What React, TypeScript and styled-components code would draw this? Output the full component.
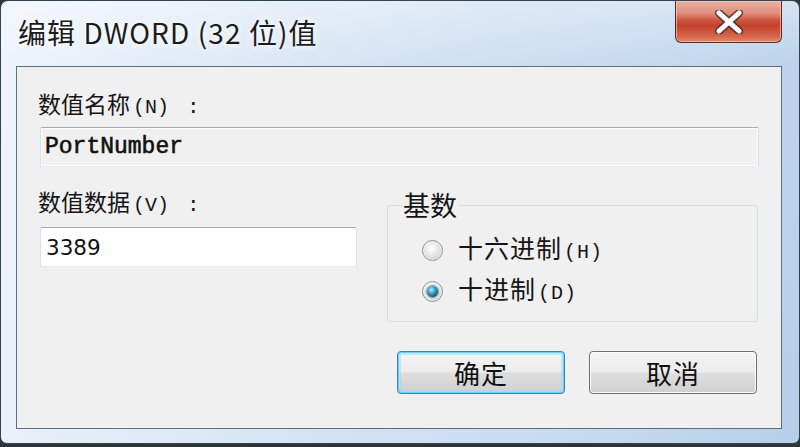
import React from "react";
import styled, { createGlobalStyle } from "styled-components";

const Global = createGlobalStyle`
  html, body { margin: 0; padding: 0; background: #2f3438; }
  body { width: 800px; height: 447px; overflow: hidden; }
  #root { width: 800px; height: 447px; }
  * { box-sizing: border-box; }
`;

const CJK = `"Noto Sans CJK SC", "Noto Sans", sans-serif`;

const Window = styled.div`
  width: 800px;
  height: 444px;
  border: 1px solid #33424f;
  border-radius: 8px 8px 7px 7px;
  background:
    linear-gradient(180deg, rgba(255,255,255,0.35) 0%, rgba(255,255,255,0) 14%),
    linear-gradient(100deg, #eef4fb 0%, #dde9f6 30%, #cfe0f2 55%, #c4d9ef 80%, #b7cfe8 100%);
  display: flex;
  flex-direction: column;
  overflow: hidden;
`;

const TitleBar = styled.div`
  height: 65px;
  display: flex;
  align-items: flex-start;
  padding-left: 17px;
`;

const Title = styled.div`
  font-family: ${CJK};
  font-size: 28px;
  line-height: 34px;
  padding-top: 14px;
  letter-spacing: 1.1px;
  color: #1b1b1b;
  text-shadow: 0 0 6px rgba(255,255,255,0.9), 0 0 10px rgba(255,255,255,0.7);
  white-space: nowrap;
`;

const CloseButton = styled.div`
  margin-left: auto;
  margin-right: 17px;
  width: 107px;
  height: 42px;
  border: 1px solid #5c2a22;
  border-top: none;
  border-radius: 0 0 6px 6px;
  background: linear-gradient(180deg, #eab0a2 0%, #e08f7d 30%, #cf5a45 45%, #c2402c 60%, #d4654c 85%, #e4866a 100%);
  box-shadow: inset 0 0 0 1px rgba(255,210,200,0.6);
  display: flex;
  align-items: center;
  justify-content: center;
`;

const ClientFrame = styled.div`
  flex: 1;
  display: flex;
  padding: 0 17px 14px 15px;
`;

const Client = styled.div`
  flex: 1;
  border: 1px solid #5f6e7c;
  background: #f0f0f0;
  display: flex;
  flex-direction: column;
  padding: 22px 22px 0 23px;
`;

const Label = styled.div`
  font-family: ${CJK};
  font-size: 23px;
  line-height: 28px;
  height: 28px;
  color: #151515;
  margin-left: -2px;
  white-space: nowrap;
`;

const Mnemonic = styled.span<{ $gap?: number }>`
  font-family: "Liberation Mono", monospace;
  font-size: 20px;
  margin-left: ${(p) => p.$gap ?? 2}px;
`;

const Colon = styled.span`
  font-family: "Liberation Mono", monospace;
  font-size: 21px;
  margin-left: 18px;
`;

const Field = styled.div<{ $readonly?: boolean; $mono?: boolean }>`
  height: 40px;
  border: 1px solid #dbdfe6;
  border-top-color: #a9abb2;
  border-bottom-color: #e3e9ef;
  border-radius: 2px;
  background: ${(p) => (p.$readonly ? "#f0f0f0" : "#ffffff")};
  box-shadow: inset 0 0 0 1px ${(p) => (p.$readonly ? "#fbfbfb" : "#ffffff")};
  display: flex;
  align-items: center;
  padding-left: ${(p) => (p.$mono ? 4 : 5)}px;
  font-family: ${(p) => (p.$mono ? `"Liberation Mono", monospace` : `"DejaVu Sans", sans-serif`)};
  font-size: ${(p) => (p.$mono ? 23 : 21.5)}px;
  -webkit-text-stroke: ${(p) => (p.$mono ? "0.6px #111" : "0")};
  color: #111;
  white-space: nowrap;
`;

const NameField = styled(Field)`
  margin-top: 10px;
`;

const Row = styled.div`
  display: flex;
  align-items: flex-start;
  margin-top: 20px;
`;

const LeftCol = styled.div`
  width: 317px;
  display: flex;
  flex-direction: column;
`;

const ValueField = styled(Field)`
  margin-top: 12px;
`;

const GroupBox = styled.fieldset`
  width: 371px;
  margin: 3px 0 0 30px;
  padding: 0;
  border: 1px solid #d3dde3;
  border-radius: 3px;
`;

const Legend = styled.legend`
  font-family: ${CJK};
  font-size: 27px;
  line-height: 30px;
  padding: 0 1px;
  margin-left: 14px;
  color: #151515;
`;

const RadioList = styled.div`
  display: flex;
  flex-direction: column;
  gap: 11px;
  padding: 15px 0 15px 34px;
`;

const RadioRow = styled.div`
  display: flex;
  align-items: center;
  gap: 15px;
  height: 30px;
`;

const RadioCircle = styled.span<{ $checked?: boolean }>`
  width: 21px;
  height: 21px;
  border-radius: 50%;
  border: 1px solid #8d9196;
  background: radial-gradient(circle at 45% 40%, #ffffff 0%, #e6e6e6 45%, #c9c9c9 80%, #dcdcdc 100%);
  box-shadow: inset 0 0 0 1px rgba(255,255,255,0.7);
  display: flex;
  align-items: center;
  justify-content: center;
  flex-shrink: 0;
  &::after {
    content: "";
    display: ${(p) => (p.$checked ? "block" : "none")};
    width: 11px;
    height: 11px;
    border-radius: 50%;
    background: radial-gradient(circle at 40% 35%, #b8f2ff 0%, #3ea6cf 35%, #17607f 70%, #0c3f57 100%);
    box-shadow: 0 0 0 1px rgba(20,70,95,0.5);
  }
`;

const RadioText = styled.span`
  font-family: ${CJK};
  font-size: 25px;
  line-height: 30px;
  letter-spacing: 1px;
  color: #151515;
  white-space: nowrap;
`;

const ButtonRow = styled.div`
  display: flex;
  justify-content: flex-end;
  gap: 24px;
  margin-top: 29px;
  margin-right: 2px;
`;

const Button = styled.div<{ $default?: boolean }>`
  width: 168px;
  height: 43px;
  border-radius: 4px;
  border: 1px solid ${(p) => (p.$default ? "#3c7fb1" : "#707070")};
  background: linear-gradient(180deg, #f4f4f4 0%, #ececec 48%, #dedede 52%, #d0d0d0 100%);
  box-shadow: ${(p) =>
    p.$default
      ? "inset 0 0 0 1px #6fd0f5, inset 0 0 0 3px rgba(150,220,248,0.55)"
      : "inset 0 0 0 1px #fbfbfb"};
  display: flex;
  align-items: center;
  justify-content: center;
  font-family: ${CJK};
  font-size: 26px;
  color: #111;
  letter-spacing: 1px;
`;

const CloseGlyph = () => (
  <svg width="30" height="24" viewBox="0 0 30 24">
    <path d="M5 3 L25 21 M25 3 L5 21" stroke="#3b2a28" strokeWidth="8" strokeLinecap="round" opacity="0.75" />
    <path d="M5 3 L25 21 M25 3 L5 21" stroke="#ffffff" strokeWidth="5" strokeLinecap="round" />
  </svg>
);

export default function App() {
  return (
    <>
      <Global />
      <Window>
        <TitleBar>
          <Title>编辑 DWORD (32 位)值</Title>
          <CloseButton>
            <CloseGlyph />
          </CloseButton>
        </TitleBar>
        <ClientFrame>
          <Client>
            <Label>
              数值名称<Mnemonic $gap={3}>(N)</Mnemonic>
              <Colon>:</Colon>
            </Label>
            <NameField $readonly $mono>PortNumber</NameField>
            <Row>
              <LeftCol>
                <Label>
                  数值数据<Mnemonic $gap={3}>(V)</Mnemonic>
                  <Colon>:</Colon>
                </Label>
                <ValueField>3389</ValueField>
              </LeftCol>
              <GroupBox>
                <Legend>基数</Legend>
                <RadioList>
                  <RadioRow>
                    <RadioCircle />
                    <RadioText>
                      十六进制<Mnemonic>(H)</Mnemonic>
                    </RadioText>
                  </RadioRow>
                  <RadioRow>
                    <RadioCircle $checked />
                    <RadioText>
                      十进制<Mnemonic>(D)</Mnemonic>
                    </RadioText>
                  </RadioRow>
                </RadioList>
              </GroupBox>
            </Row>
            <ButtonRow>
              <Button $default>确定</Button>
              <Button>取消</Button>
            </ButtonRow>
          </Client>
        </ClientFrame>
      </Window>
    </>
  );
}
